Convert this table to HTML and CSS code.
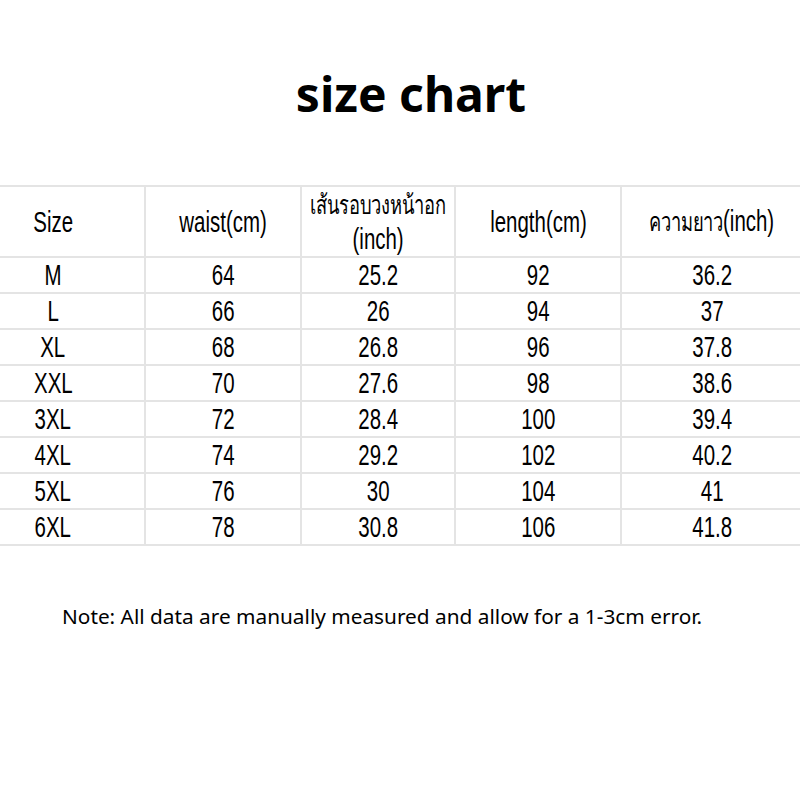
FILE: index.html
```html
<!DOCTYPE html>
<html>
<head>
<meta charset="utf-8">
<link rel="stylesheet" href="styles.css">
</head>
<body>
<div class="page">
  <h1 class="title">size chart</h1>
  <table class="chart">
    <colgroup>
      <col class="c1"><col class="c2"><col class="c3"><col class="c4"><col class="c5">
    </colgroup>
    <thead>
      <tr>
        <th><span class="t">Size</span></th>
        <th><span class="t">waist(cm)</span></th>
        <th><span class="t"><span class="th-thai">เส้นรอบวงหน้าอก</span><br>(inch)</span></th>
        <th><span class="t">length(cm)</span></th>
        <th><span class="t"><span class="th-thai">ความยาว</span>(inch)</span></th>
      </tr>
    </thead>
    <tbody>
      <tr><td><span class="t">M</span></td><td><span class="t">64</span></td><td><span class="t">25.2</span></td><td><span class="t">92</span></td><td><span class="t">36.2</span></td></tr>
      <tr><td><span class="t">L</span></td><td><span class="t">66</span></td><td><span class="t">26</span></td><td><span class="t">94</span></td><td><span class="t">37</span></td></tr>
      <tr><td><span class="t">XL</span></td><td><span class="t">68</span></td><td><span class="t">26.8</span></td><td><span class="t">96</span></td><td><span class="t">37.8</span></td></tr>
      <tr><td><span class="t">XXL</span></td><td><span class="t">70</span></td><td><span class="t">27.6</span></td><td><span class="t">98</span></td><td><span class="t">38.6</span></td></tr>
      <tr><td><span class="t">3XL</span></td><td><span class="t">72</span></td><td><span class="t">28.4</span></td><td><span class="t">100</span></td><td><span class="t">39.4</span></td></tr>
      <tr><td><span class="t">4XL</span></td><td><span class="t">74</span></td><td><span class="t">29.2</span></td><td><span class="t">102</span></td><td><span class="t">40.2</span></td></tr>
      <tr><td><span class="t">5XL</span></td><td><span class="t">76</span></td><td><span class="t">30</span></td><td><span class="t">104</span></td><td><span class="t">41</span></td></tr>
      <tr><td><span class="t">6XL</span></td><td><span class="t">78</span></td><td><span class="t">30.8</span></td><td><span class="t">106</span></td><td><span class="t">41.8</span></td></tr>
    </tbody>
  </table>
  <p class="note">Note: All data are manually measured and allow for a 1-3cm error.</p>
</div>
</body>
</html>
```
FILE: styles.css
```css
html, body {
  margin: 0;
  padding: 0;
  background: #ffffff;
}
.page {
  width: 800px;
  height: 800px;
  overflow: hidden;
  padding-top: 64px;
  box-sizing: border-box;
}
.title {
  margin: 0;
  text-align: center;
  padding-left: 22px;
  font-family: "Noto Sans", "Open Sans", sans-serif;
  font-weight: 700;
  font-size: 48px;
  line-height: 60px;
  color: #000;
}
.chart {
  margin-top: 61px;
  margin-left: -40px;
  border-collapse: collapse;
  table-layout: fixed;
  width: 842px;
  font-family: "Liberation Sans", Arial, sans-serif;
  font-size: 29px;
  color: #000;
}
.c1 { width: 184px; }
.c2 { width: 156px; }
.c3 { width: 154px; }
.c4 { width: 166px; }
.c5 { width: 182px; }
.chart th, .chart td {
  border: 2px solid #e4e4e4;
  text-align: center;
  font-weight: 400;
  padding: 0;
  white-space: nowrap;
  overflow: visible;
}
.t {
  display: inline-block;
  margin: 0 -80px;
  transform: scaleX(0.705);
  transform-origin: center;
}
.th-thai {
  display: inline-block;
  font-size: 26px;
  letter-spacing: -0.6px;
}
.chart th {
  height: 69px;
  line-height: 34px;
}
.chart td {
  height: 34px;
  line-height: 34px;
}
.note {
  margin: 56px 0 0 62px;
  font-family: "Noto Sans", "Open Sans", sans-serif;
  font-size: 20.8px;
  line-height: 28px;
  color: #000;
}
```
